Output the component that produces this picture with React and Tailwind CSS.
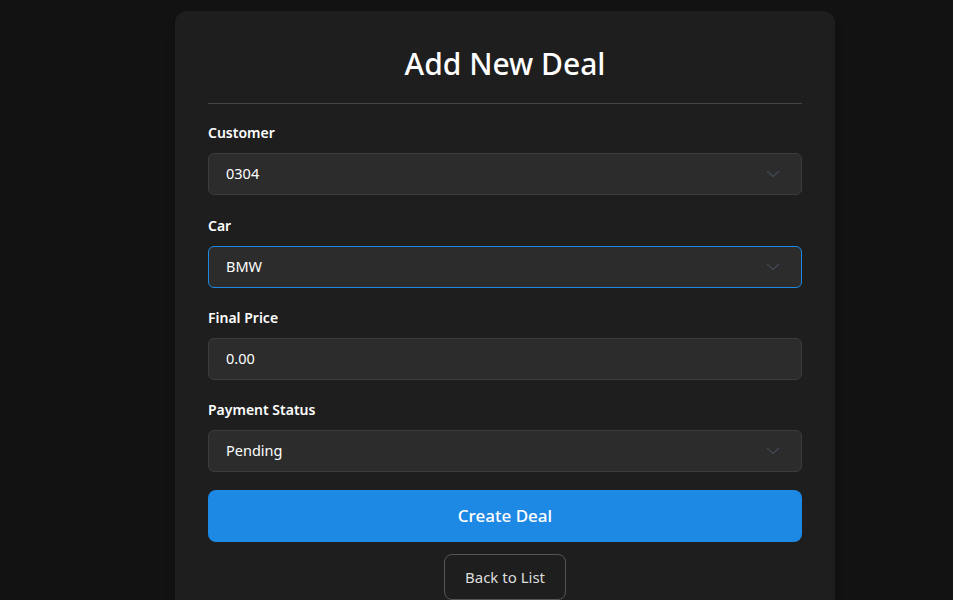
import React from "react";

function Chevron() {
  return (
    <svg width="14" height="8" viewBox="0 0 14 8" fill="none" className="shrink-0">
      <path d="M1.5 1.5 L7 6.5 L12.5 1.5" stroke="#3f4652" strokeWidth="1.5" strokeLinecap="round" strokeLinejoin="round" />
    </svg>
  );
}

function Field({ label, value, select, focused, first }) {
  return (
    <div className={first ? "mb-[21px]" : "mb-5"}>
      <div className="mb-[10px] text-[14px] leading-5 font-semibold text-white">{label}</div>
      <div
        className={`flex h-[42px] items-center justify-between rounded-md border bg-[#2c2c2c] pl-[17px] pr-[21px] text-[14.5px] text-white ${
          focused ? "border-[#1e88e5]" : "border-[#3c3c3c]"
        }`}
      >
        <span>{value}</span>
        {select ? <Chevron /> : null}
      </div>
    </div>
  );
}

export default function App() {
  return (
    <div className="min-h-[600px] bg-[#121212] pt-[11px]" style={{ fontFamily: '"Noto Sans", "Open Sans", sans-serif' }}>
      <div className="ml-[175px] w-[660px] rounded-xl bg-[#1e1e1e] px-[33px] pt-[33px] pb-8 shadow-lg">
        <div className="border-b border-[#454545] pb-[19px]">
          <h1 className="text-center text-[30px] leading-10 font-medium text-white">Add New Deal</h1>
        </div>
        <div className="mt-[19px]">
          <Field label="Customer" value="0304" select first />
          <Field label="Car" value="BMW" select focused />
          <Field label="Final Price" value="0.00" />
          <Field label="Payment Status" value="Pending" select />
        </div>
        <button className="mt-[-2px] h-[52px] w-full rounded-lg bg-[#1e88e5] text-[17px] font-medium text-white">
          Create Deal
        </button>
        <div className="mt-3 flex justify-center">
          <button className="h-[46px] w-[122px] rounded-lg border border-[#555555] text-[15px] text-[#dddddd]">
            Back to List
          </button>
        </div>
      </div>
    </div>
  );
}
